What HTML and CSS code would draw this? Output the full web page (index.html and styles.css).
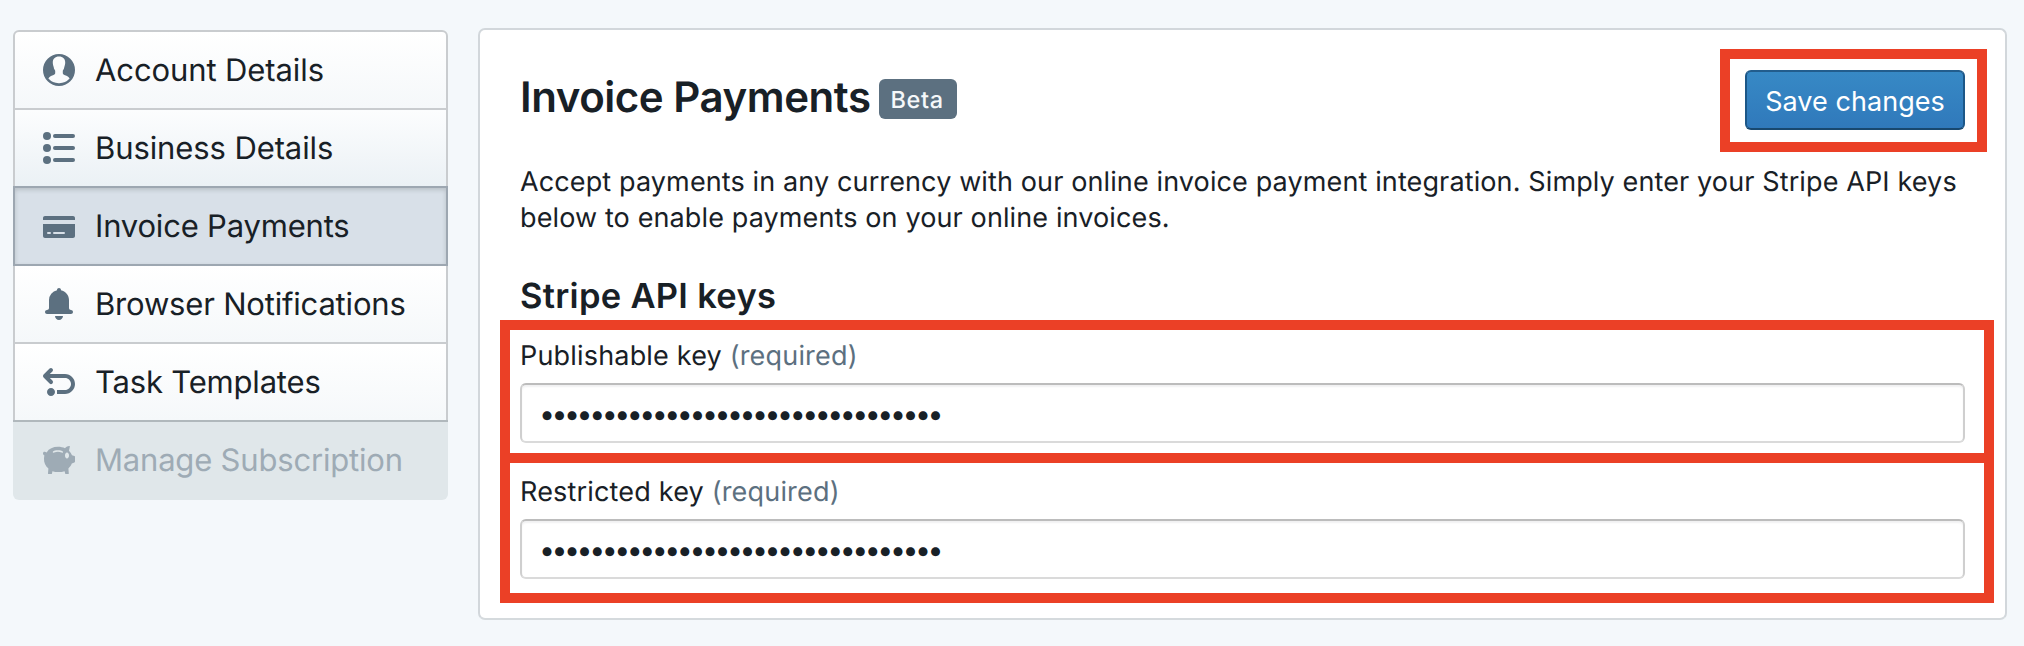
FILE: index.html
```html
<!DOCTYPE html>
<html lang="en">
<head>
<meta charset="utf-8">
<title>Invoice Payments</title>
<link rel="stylesheet" href="styles.css">
</head>
<body>
<div class="page">
  <nav class="menu">
    <a class="item first"><svg class="icon" viewBox="0 0 16 16"><path fill-rule="evenodd" d="M8 0a8 8 0 100 16A8 8 0 008 0zM8 1.3c2 0 3.1 1.2 3.1 3 0 .9-.2 1.5-.4 2.1-.2.5-.1.7-.3 1.1-.2.5-.5.6-.5 1v1c0 .6.3.8 1.1 1.1 1 .4 2 .8 2.3 1.7A6.9 6.9 0 018 14.6a6.900 6.900 0 01-5.300-2.300c.3-.9 1.300-1.300 2.300-1.700.800-.3 1.100-.5 1.100-1.100v-1c0-.4-.3-.5-.5-1-.2-.4-.1-.6-.3-1.100-.2-.6-.4-1.200-.4-2.100 0-1.800 1.100-3 3.100-3z"/></svg><span class="tight">Account Details</span></a>
    <a class="item hover"><svg class="icon" viewBox="0 0 16 16"><circle cx="2" cy="2" r="2"/><circle cx="2" cy="8" r="2"/><circle cx="2" cy="14" r="2"/><rect x="5" y="1" width="11" height="2" rx="1"/><rect x="5" y="7" width="11" height="2" rx="1"/><rect x="5" y="13" width="11" height="2" rx="1"/></svg><span class="tight">Business Details</span></a>
    <a class="item active"><svg class="icon" viewBox="0 0 16 16"><path fill-rule="evenodd" d="M1 3h14c.55 0 1 .45 1 1v1H0V4c0-.55.45-1 1-1zM0 7h16v6c0 .55-.45 1-1 1H1c-.55 0-1-.45-1-1V7zm2.500 4a.5.5 0 000 1h1a.5.5 0 000-1zm3 0a.5.5 0 000 1h5a.5.5 0 000-1z"/></svg><span class="tighter">Invoice Payments</span></a>
    <a class="item"><svg class="icon" viewBox="0 0 16 16"><path d="M8 16c1.100 0 2-.9 2-2H6c0 1.100.9 2 2 2zm6-5c-.55 0-1-.45-1-1V6c0-2.430-1.730-4.450-4.020-4.900 0-.04.02-.06.02-.1 0-.55-.45-1-1-1S7 .45 7 1c0 .04.02.06.02.1A4.992 4.992 0 003 6v4c0 .55-.45 1-1 1s-1 .45-1 1 .45 1 1 1h12c.55 0 1-.45 1-1s-.45-1-1-1z"/></svg><span class="tighter">Browser Notifications</span></a>
    <a class="item"><svg class="icon" viewBox="0 0 16 16"><path d="M4 11c-1.100 0-2 .9-2 2s.9 2 2 2 2-.9 2-2-.9-2-2-2zm7-7H3.410L4.700 2.710c.19-.18.3-.43.3-.71a1.003 1.003 0 00-1.710-.71l-3 3C.11 4.470 0 4.720 0 5s.11.53.29.71l3 3a1.003 1.003 0 001.420-1.420L3.410 6H11c1.660 0 3 1.340 3 3s-1.340 3-3 3H7v2h4c2.760 0 5-2.240 5-5s-2.240-5-5-5z"/></svg><span class="tighter">Task Templates</span></a>
    <a class="item disabled"><svg class="icon" viewBox="0 0 16 16"><path fill-rule="evenodd" d="M0 4.600C0 4 .5 3.700 1 3.900l.8.3C3 2.300 5 1.400 7.500 1.400c1.300 0 2.500.3 3.500.7.4-.6 1.100-1 2.200-1.100.2 0 .3.200.2.4l-.4 2c.7.7 1.200 1.400 1.500 2.200l1.200.4c.2.1.3.2.3.4v2.300c0 .2-.1.4-.3.5l-1.300.6c-.4 1-1 1.800-1.700 2.400l.2 2.500c0 .2-.1.3-.3.3h-1.200c-.2 0-.3-.1-.3-.3l-.3-1.100c-1.900.6-4.300.6-6.100 0l-.2 1.100c0 .2-.2.3-.4.3H2.800c-.2 0-.4-.1-.3-.4l.2-2.300C1.200 10.900.4 9.200.5 7.200c0-.5.1-1 .2-1.500C.2 5.500 0 5.100 0 4.600zM5 3.700c-.3.400.1.8.6.6 1.200-.5 2.500-.5 3.700 0 .5.2.9-.2.6-.6C9.300 2.900 5.600 2.900 5 3.700zM12 4.200c-.6 0-1 .7-1 1.500s.4 1.500 1 1.500 1-.7 1-1.500-.4-1.500-1-1.500z"/></svg><span class="tighter">Manage Subscription</span></a>
  </nav>
  <main class="panel">
    <header class="head">
      <h1 class="title"><span class="title-text">Invoice Payments</span><span class="badge">Beta</span></h1>
      <button class="save">Save changes</button>
    </header>
    <p class="intro">Accept payments in any currency with our online invoice payment integration. Simply enter your Stripe API keys<br>below to enable payments on your online invoices.</p>
    <h2 class="sub">Stripe API keys</h2>
    <div class="field">
      <div class="label">Publishable key <span class="req">(required)</span></div>
      <div class="input"><span class="dots">••••••••••••••••••••••••••••••••</span></div>
    </div>
    <div class="field">
      <div class="label">Restricted key <span class="req">(required)</span></div>
      <div class="input"><span class="dots">••••••••••••••••••••••••••••••••</span></div>
    </div>
    <i class="mark mark-save"></i>
    <i class="mark mark-first"></i>
    <i class="mark mark-second"></i>
  </main>
</div>
</body>
</html>
```
FILE: styles.css
```css
* { box-sizing: border-box; }
body { margin: 0; background: #f4f8fb; color: #182026; font-family: Inter, "Liberation Sans", sans-serif; text-rendering: geometricPrecision; }
.page { display: flex; align-items: flex-start; gap: 30px; height: 646px; padding: 28px 17px 0 13px; }
.menu { display: flex; flex-direction: column; width: 435px; margin-top: 2px; flex: none; }
.item { display: flex; align-items: center; gap: 20px; height: 80px; margin-bottom: -2px; padding: 0 28px; border: 2px solid #c9cccf; background: linear-gradient(#fff, #f5f8fa); font-size: 31px; line-height: 38px; white-space: nowrap; }
.item span { padding-top: 2px; }
.item.first { border-radius: 6px 6px 0 0; }
.item.hover { background: linear-gradient(#fcfdfe, #ebf1f5); }
.item.active { z-index: 1; border-color: #9da7b1; background: #d8e0e8; box-shadow: inset 0 2px 4px rgba(16, 22, 26, .16); }
.item.disabled { border: 0; border-top: 2px solid #b0b8bc; border-radius: 0 0 6px 6px; padding: 0 30px 2px; background: #e0e7ea; color: #9eabb5; margin-bottom: 0; }
.tight { letter-spacing: -.1px; }
.tighter { letter-spacing: -.19px; }
.icon { width: 32px; height: 32px; flex: none; fill: #5c7080; }
.disabled .icon { fill: #9eabb5; }
.panel { position: relative; flex: 1; height: 592px; padding: 40px 40px 0; border: 2px solid #d2d7db; border-bottom-color: #d5dadd; border-radius: 7px; background: #fff; }
.head { display: flex; justify-content: space-between; align-items: flex-start; height: 60px; }
.title { display: flex; margin: 0; gap: 8px; line-height: 56px; font-size: 42px; font-weight: 600; }
.title-text { letter-spacing: -.45px; }
.badge { width: 78px; height: 40px; margin-top: 9px; padding-left: 12px; border-radius: 6px; background: #5c7080; color: #f5f8fa; font-size: 23.500px; font-weight: 500; letter-spacing: .6px; line-height: 41px; }
.save { width: 220px; height: 60px; padding: 2px 0 0; border: 2px solid #1c5788; border-top-color: #225d8d; border-bottom-color: #18486f; border-radius: 6px; background: linear-gradient(#3789c5, #3079bb); color: #fff; font-family: inherit; font-size: 27px; letter-spacing: .05px; }
.intro { margin: 34px 0 0; font-size: 27px; line-height: 36px; letter-spacing: .12px; white-space: nowrap; }
.sub { margin: 39px 0 19px; font-size: 34.500px; font-weight: 600; letter-spacing: .3px; line-height: 44px; }
.field { margin-bottom: 31px; }
.label { font-size: 27px; line-height: 36px; letter-spacing: .18px; white-space: nowrap; }
.req { color: #5c7080; }
.input { display: flex; align-items: center; height: 60px; margin-top: 9px; padding: 2px 17px 0; border: 2px solid #cfcfcf; border-top-color: #bcbcbc; border-bottom-color: #dadada; border-radius: 6px; box-shadow: inset 0 2px 2px rgba(16, 22, 26, .06); }
.dots { font-size: 28.500px; line-height: 36px; letter-spacing: -3.500px; }
.mark { position: absolute; border: 10px solid #eb4026; }
.mark-save { left: 1240px; top: 19px; width: 267px; height: 103px; }
.mark-first { left: 20px; top: 290px; width: 1494px; height: 143px; }
.mark-second { left: 20px; top: 423px; width: 1494px; height: 150px; }
```
